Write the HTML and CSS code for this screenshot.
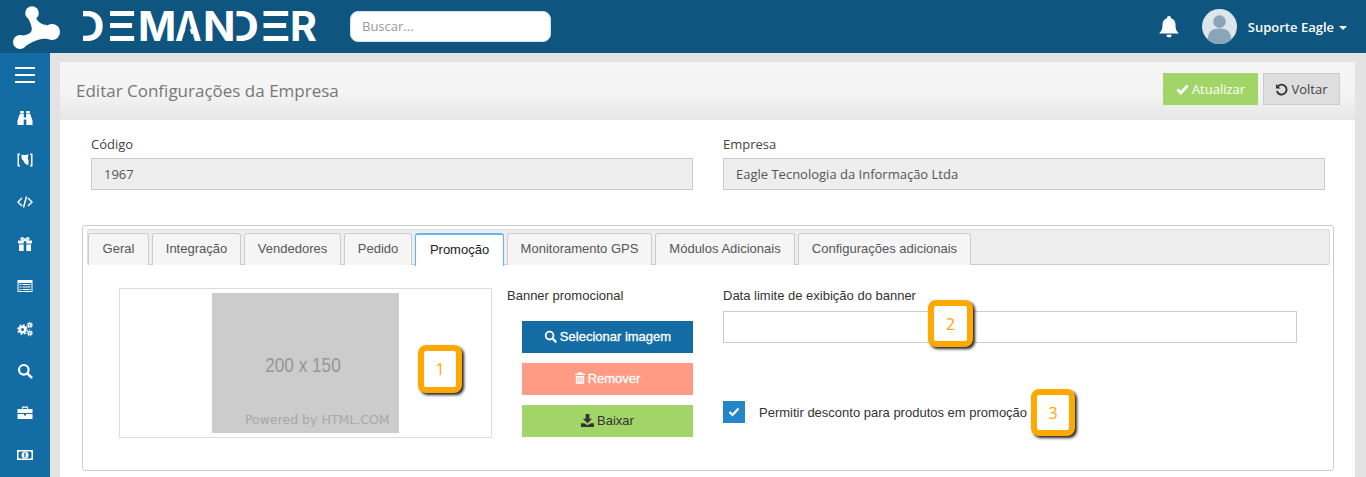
FILE: index.html
```html
<!DOCTYPE html>
<html lang="pt-BR">
<head>
<meta charset="utf-8">
<title>Editar Configurações da Empresa</title>
<link rel="stylesheet" href="styles.css">
</head>
<body>
<div class="app">
  <header class="topbar">
    <svg class="logo-mark" viewBox="0 0 47 47" aria-hidden="true">
      <g fill="#fff">
        <circle cx="19" cy="10" r="6.800"/>
        <circle cx="39" cy="29" r="8"/>
        <circle cx="7" cy="39" r="7"/>
        <path d="M23 15C25 19 29 22 34 22L36 36C28 35 22 37 11 44L4 33C10 33 15 32 18 29C20 26 18 21 15 15Z"/>
      </g>
    </svg>
    <div class="logo-text"><span class="lg lg-d1">D</span><span class="lg lg-e1">E</span><span class="lg lg-m">M</span><span class="lg lg-a">A</span><span class="lg lg-n">N</span><span class="lg lg-d2">D</span><span class="lg lg-e2">E</span><span class="lg lg-r">R</span></div>
    <div class="search">Buscar...</div>
    <div class="top-right">
      <svg class="bell" viewBox="0 0 20 22" aria-hidden="true"><path fill="#fff" d="M10 0a2 2 0 0 1 2 2.200c3 .8 4.500 3.400 4.500 6.300 0 5 1.200 6.800 3.500 9H0c2.300-2.200 3.500-4 3.500-9 0-2.900 1.500-5.500 4.500-6.300A2 2 0 0 1 10 0Zm-2.600 18.700h5.200a2.600 2.600 0 0 1-5.200 0Z"/></svg>
      <svg class="avatar" viewBox="0 0 36 36" aria-hidden="true">
        <circle cx="18" cy="18" r="18" fill="#dde5ec"/>
        <circle cx="18" cy="13" r="6.500" fill="#8aa5b7"/>
        <path fill="#8aa5b7" d="M6 32c0-9 4-12 12-12s12 3 12 12a18 18 0 0 1-24 0Z"/>
      </svg>
      <span class="user">Suporte Eagle</span>
      <span class="caret"></span>
    </div>
  </header>
  <div class="main">
    <nav class="sidebar">
      <div class="side-item side-first"><span class="burger"><i></i><i></i><i></i></span></div>
      <div class="side-item"><svg viewBox="0 0 16 16"><path fill="#fff" d="M3.200 1h3.600v2.500H3.200zM9.200 1h3.600v2.500H9.200zM2.800 4H6.800v3.500h2.400V4h4l2.300 6.500V15H9.300V9.500H6.700V15H.5v-4.500z"/></svg></div>
      <div class="side-item"><svg viewBox="0 0 16 16"><path fill="#fff" d="M.5 1.500H3V3H2v10h1v1.500H.5zM15.500 1.500H13V3h1v10h-1v1.500h2.500zM4.500 3c1.500-.6 2.500 0 3.500 0 1.200 0 2.500-.6 3.500-.3-.4 2-1.200 3-.5 4.300.6 1.500.8 4 .3 6-1.500 0-2.300-1-3.300-1.500C7 10 6.500 8.500 5.200 7.500 4.500 6.500 4.200 4.500 4.500 3z"/></svg></div>
      <div class="side-item"><svg viewBox="0 0 16 16"><path fill="none" stroke="#fff" stroke-width="1.500" d="M5 4 1 8l4 4M11 4l4 4-4 4M9.500 2.500l-3 11"/></svg></div>
      <div class="side-item"><svg viewBox="0 0 16 16"><path fill="#fff" d="M1 4.500h14v3H1zM2 8.500h12V15H2z"/><path fill="#146ca4" d="M6.700 4.500h2.600V15H6.700z"/><path fill="none" stroke="#fff" stroke-width="1.500" d="M8 4.500C7 2 5 1.200 4.300 2.200 3.600 3.400 5.500 4.500 8 4.500ZM8 4.500C9 2 11 1.200 11.700 2.200 12.400 3.400 10.500 4.500 8 4.500Z"/></svg></div>
      <div class="side-item"><svg viewBox="0 0 16 16"><path fill="#fff" fill-rule="evenodd" d="M.5 2h15v12H.5zM1.500 5v8h13V5zM2.500 6h2v1h-2zM5.500 6h8v1h-8zM2.500 8.500h2v1h-2zM5.500 8.500h8v1h-8zM2.500 11h2v1h-2zM5.500 11h8v1h-8z"/></svg></div>
      <div class="side-item"><svg viewBox="0 0 16 16"><g fill="none" stroke="#fff"><circle cx="5.500" cy="8.500" r="2.800" stroke-width="2.600"/><circle cx="5.500" cy="8.500" r="4.600" stroke-width="1.500" stroke-dasharray="1.800 1.800"/><circle cx="12.800" cy="4" r="1.500" stroke-width="1.600"/><circle cx="12.800" cy="4" r="2.800" stroke-width="1" stroke-dasharray="1.200 1.200"/><circle cx="12.800" cy="12" r="1.500" stroke-width="1.600"/><circle cx="12.800" cy="12" r="2.800" stroke-width="1" stroke-dasharray="1.200 1.200"/></g></svg></div>
      <div class="side-item"><svg viewBox="0 0 16 16"><circle cx="6.800" cy="6.800" r="4.800" fill="none" stroke="#fff" stroke-width="2.200"/><path stroke="#fff" stroke-width="2.600" stroke-linecap="round" d="m10.800 10.800 3.500 3.500"/></svg></div>
      <div class="side-item"><svg viewBox="0 0 16 16"><path fill="#fff" d="M5 1.500h6v2.500H10V2.700H6V4H5zM.5 4h15v4H.5zM.5 9H7v1.500h2V9h6.500v5H.5z"/></svg></div>
      <div class="side-item"><svg viewBox="0 0 16 16"><path fill="#fff" fill-rule="evenodd" d="M0 3h16v10H0zM2.500 4.500 1.500 5.500v5l1 1h11l1-1v-5l-1-1z"/><circle cx="8" cy="8" r="3.500" fill="#fff"/><path fill="#146ca4" d="M7.300 5.800h1.400v4.400H7.300z"/></svg></div>
    </nav>
    <div class="content">
      <section class="card">
        <div class="card-head">
          <h1 class="page-title">Editar Configurações da Empresa</h1>
          <div class="head-actions">
            <div class="btn-head btn-update">
              <svg class="ico13" viewBox="0 0 14 12"><path fill="none" stroke="#fff" stroke-width="3" d="m1.500 6 3.800 3.700 7.200-8"/></svg>
              Atualizar
            </div>
            <div class="btn-head btn-back">
              <svg class="ico13" viewBox="0 0 14 14"><path fill="none" stroke="#333" stroke-width="2" d="M3.200 3.500A5.300 5.300 0 1 1 2 8.500"/><path fill="#333" d="M1 1v5h5z"/></svg>
              Voltar
            </div>
          </div>
        </div>
        <div class="card-body">
          <div class="fields">
            <div class="field">
              <div class="field-label">Código</div>
              <div class="field-value">1967</div>
            </div>
            <div class="field">
              <div class="field-label">Empresa</div>
              <div class="field-value">Eagle Tecnologia da Informação Ltda</div>
            </div>
          </div>
          <div class="tabbox">
            <div class="tabbar">
              <div class="tab tab-geral">Geral</div>
              <div class="tab tab-integ">Integração</div>
              <div class="tab tab-vend">Vendedores</div>
              <div class="tab tab-ped">Pedido</div>
              <div class="tab tab-active">Promoção</div>
              <div class="tab tab-mon">Monitoramento GPS</div>
              <div class="tab tab-mod">Módulos Adicionais</div>
              <div class="tab tab-conf">Configurações adicionais</div>
            </div>
            <div class="tabpane">
              <div class="banner-frame">
                <div class="placeholder">
                  <span class="ph-size">200 x 150</span>
                  <span class="ph-power">Powered by HTML.COM</span>
                </div>
                <div class="badge badge-1">1</div>
              </div>
              <div class="banner-col">
                <div class="col-label">Banner promocional</div>
                <div class="action-btn action-blue">
                  <svg class="ico13" viewBox="0 0 14 14"><circle cx="6" cy="6" r="4.200" fill="none" stroke="#fff" stroke-width="2"/><path stroke="#fff" stroke-width="2.400" stroke-linecap="round" d="m9.500 9.500 3 3"/></svg>
                  Selecionar imagem
                </div>
                <div class="action-btn action-red">
                  <svg class="ico12" viewBox="0 0 12 14"><path fill="#fff" d="M4 0h4l1 2h3v1.500H0V2h3zM1 4.500h10V14H1zM3 6v6h1V6zm2.500 0v6h1V6zM8 6v6h1V6z" fill-rule="evenodd"/></svg>
                  Remover
                </div>
                <div class="action-btn action-green">
                  <svg class="ico13" viewBox="0 0 14 14"><path fill="#333" d="M5 0h4v5h3L7 10 2 5h3zM0 10h3.500L7 12l3.500-2H14v4H0z"/></svg>
                  Baixar
                </div>
              </div>
              <div class="date-col">
                <div class="col-label col-label-date">Data limite de exibição do banner</div>
                <div class="date-input"></div>
                <div class="badge badge-2">2</div>
                <div class="check-row">
                  <span class="check"><svg viewBox="0 0 12 10"><path fill="none" stroke="#fff" stroke-width="2.200" d="m1.500 5 3 3 6-6.500"/></svg></span>
                  <span class="check-text">Permitir desconto para produtos em promoção</span>
                </div>
                <div class="badge badge-3">3</div>
              </div>
            </div>
          </div>
        </div>
      </section>
    </div>
  </div>
</div>
</body>
</html>
```
FILE: styles.css
```css
* { box-sizing: border-box; }
html, body { margin: 0; padding: 0; height: 477px; overflow: hidden; }
body { font-family: "Open Sans", "Liberation Sans", sans-serif; background: #e3e3e3; color: #333; }
.app { display: flex; flex-direction: column; height: 477px; overflow: hidden; }

.topbar { flex: 0 0 53px; height: 53px; background: #0e5580; display: flex; align-items: center; padding-left: 13px; }
.logo-mark { width: 47px; height: 47px; flex: none; }
.logo-text { margin-left: 12px; width: 238px; flex: none; display: flex; font-family: "Inter", "Liberation Sans", sans-serif; font-weight: 700; font-size: 41px; line-height: 53px; color: #fff; white-space: nowrap; }
.lg { display: block; min-width: 0; transform-origin: 0 50%; }
.lg-d1 { flex: 0 0 19px; letter-spacing: -15px; transform: scaleX(1.1); clip-path: inset(0 -30px 0 10px); }
.lg-e1 { flex: 0 0 47px; letter-spacing: -1px; transform: scaleX(1.9); clip-path: inset(0 -30px 0 10px); }
.lg-m { flex: 0 0 37px; letter-spacing: -1px; }
.lg-a { flex: 0 0 28px; letter-spacing: -1px; transform: scaleX(.87); clip-path: polygon(-5px 0, 40px 0, 40px 60px, 27.300px 60px, 14.500px 21.500px, 1.700px 60px, -5px 60px); }
.lg-n { flex: 0 0 22px; letter-spacing: -11px; transform: scaleX(1.04); }
.lg-d2 { flex: 0 0 19px; letter-spacing: -15px; transform: scaleX(1.15); clip-path: inset(0 -30px 0 10px); }
.lg-e2 { flex: 0 0 46px; letter-spacing: -1px; transform: scaleX(1.95); clip-path: inset(0 -30px 0 10px); }
.lg-r { flex: 0 0 20px; }
.search { margin-left: 40px; width: 201px; height: 31px; background: #fff; border: 1px solid #cfe3f2; border-radius: 8px; font-size: 13px; line-height: 29px; padding-left: 11px; color: #999; }
.top-right { margin-left: auto; display: flex; align-items: center; padding-right: 19px; }
.bell { width: 20px; height: 22px; }
.avatar { width: 35px; height: 35px; margin-left: 23px; }
.user { margin-left: 11px; font-size: 13px; font-weight: 600; color: #fff; }
.caret { margin-left: 5px; margin-top: 2px; width: 0; height: 0; border-left: 4px solid transparent; border-right: 4px solid transparent; border-top: 4px solid #fff; }

.main { flex: 1; display: flex; min-height: 0; }
.sidebar { flex: 0 0 50px; background: #146ca4; display: flex; flex-direction: column; }
.side-item { flex: 0 0 42.100px; display: flex; align-items: center; justify-content: center; }
.side-item svg { width: 16px; height: 16px; }
.side-first { flex-basis: 44px; }
.burger { display: flex; flex-direction: column; gap: 5px; width: 20px; }
.burger i { display: block; height: 2px; background: #fff; }

.content { flex: 1; min-width: 0; padding: 9px 11px 0 10px; }
.card { background: #fff; height: 100%; display: flex; flex-direction: column; }
.card-head { flex: 0 0 58px; display: flex; justify-content: space-between; background: linear-gradient(#f5f5f5 0, #f4f4f4 55%, #e6e6e6 100%); padding: 11px 15px 0 16px; }
.page-title { margin: 0; font-size: 17px; font-weight: 400; color: #777; line-height: 36px; }
.head-actions { display: flex; gap: 5px; }
.btn-head { height: 32px; font-size: 13px; display: flex; align-items: center; justify-content: center; gap: 3px; }
.btn-update { width: 95px; background: #a2d568; color: #fff; }
.btn-back { width: 77px; background: #dedede; border: 1px solid #ccc; color: #444; }
.ico13 { width: 13px; height: 13px; flex: none; }
.ico12 { width: 10px; height: 12px; flex: none; }

.card-body { flex: 1; padding: 0 0 0 22px; }
.fields { display: flex; gap: 30px; padding: 15px 0 0 9px; }
.field { width: 602px; }
.field-label { font-size: 13px; line-height: 18px; height: 23px; color: #444; }
.field-value { height: 32px; background: #eee; border: 1px solid #ccc; font-size: 13px; line-height: 31px; padding-left: 12px; color: #555; }

.tabbox { margin-top: 35px; width: 1252px; height: 246px; border: 1px solid #ccc; border-radius: 3px; padding: 3px 3px 0 4px; font-family: "Liberation Sans", Arial, sans-serif; }
.tabbar { height: 36px; background: #eee; border: 1px solid #ddd; border-bottom: 1px solid #ccc; border-radius: 3px; display: flex; gap: 3px; padding: 3px 0 0 0; }
.tab { height: 32px; padding-bottom: 2px; border: 1px solid #ccc; border-bottom: none; border-radius: 3px 3px 0 0; background: #f5f5f5; font-size: 13px; color: #555; display: flex; align-items: center; justify-content: center; }
.tab-geral { width: 61px; }
.tab-integ { width: 89px; }
.tab-vend { width: 97px; }
.tab-ped { width: 68px; }
.tab-active { width: 89px; height: 33px; padding-bottom: 2px; background: #fff; border: 1px solid #63b4f4; border-top-width: 2px; border-bottom: none; color: #222; }
.tab-mon { width: 145px; }
.tab-mod { width: 140px; }
.tab-conf { width: 173px; }

.tabpane { display: flex; padding-top: 23px; font-size: 13px; }
.banner-frame { position: relative; margin-left: 32px; width: 373px; height: 150px; border: 1px solid #ddd; padding: 4px 0 0 92px; flex: none; }
.placeholder { position: relative; width: 187px; height: 140px; background: #ccc; display: flex; justify-content: center; padding: 61px 5px 0 0; }
.ph-size { font-size: 20px; line-height: 22px; color: #969696; transform: scaleX(.86); }
.ph-power { position: absolute; left: 33px; bottom: 6px; font-family: "DejaVu Sans", sans-serif; font-size: 12.500px; line-height: 14px; color: #a8a8a8; white-space: nowrap; }
.badge { position: absolute; background: #fff; border: 6px solid #ffa800; border-radius: 8px; color: #ffa800; font-family: "Open Sans", sans-serif; font-size: 16px; display: flex; align-items: center; justify-content: center; box-shadow: 2px 2px 3px #222; }
.badge-1 { left: 298px; top: 56px; width: 44px; height: 48px; }
.banner-col { flex: 0 0 186px; margin-left: 15px; display: flex; flex-direction: column; }
.col-label { font-size: 13px; line-height: 16px; color: #333; }
.col-label-date { margin-bottom: 7px; }
.action-btn { margin: 9px 0 0 15px; width: 171px; height: 32px; padding-bottom: 2px; display: flex; align-items: center; justify-content: center; gap: 3px; font-size: 13px; font-weight: 400; }
.action-btn + .action-btn { margin-top: 10px; }
.col-label + .action-btn { margin-top: 17px; }
.action-blue { background: #146ca4; color: #fff; -webkit-text-stroke: .3px #fff; }
.action-red { background: #ff9a85; color: #fff; -webkit-text-stroke: .3px #fff; }
.action-green { background: #a2d568; color: #333; }
.date-col { position: relative; margin-left: 30px; width: 574px; }
.date-input { height: 32px; background: #fff; border: 1px solid #ccc; }
.badge-2 { left: 205px; top: 12px; width: 45px; height: 47px; }
.check-row { display: flex; align-items: center; margin-top: 58px; }
.check { width: 22px; height: 22px; background: #2486c6; display: flex; align-items: center; justify-content: center; }
.check svg { width: 12px; height: 10px; }
.check-text { margin-left: 14px; font-size: 13px; color: #333; }
.badge-3 { left: 308px; top: 101px; width: 44px; height: 47px; }
```
